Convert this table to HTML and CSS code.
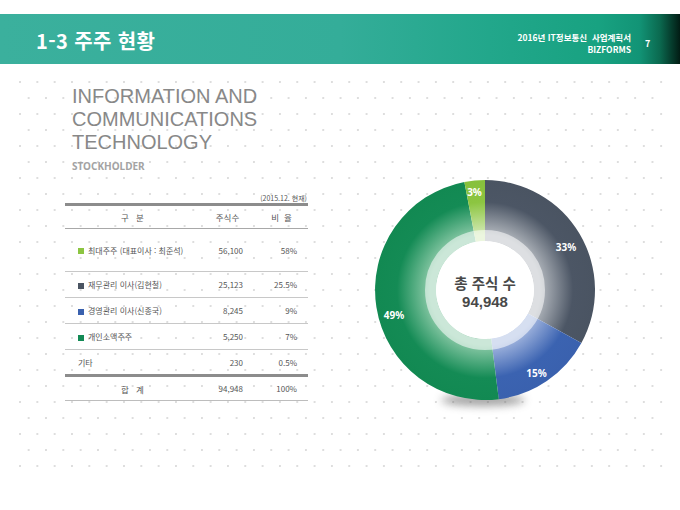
FILE: index.html
```html
<!DOCTYPE html>
<html lang="ko">
<head>
<meta charset="utf-8">
<link rel="stylesheet" href="styles.css">
</head>
<body>
<header class="topbar">
  <h1 class="page-title">1-3 주주 현황</h1>
  <div class="doc-info">
    <div>2016년 IT정보통신&nbsp; 사업계획서</div>
    <div>BIZFORMS</div>
  </div>
  <div class="page-num">7</div>
</header>
<main class="content">
  <section class="left">
    <h2 class="big-title">INFORMATION AND<br>COMMUNICATIONS<br>TECHNOLOGY</h2>
    <div class="subtitle">STOCKHOLDER</div>
    <div class="note">(2015.12. 현재)</div>
    <table class="stock">
      <thead>
        <tr class="head"><th class="c-name">구&nbsp;&nbsp;&nbsp;분</th><th class="c-num">주식수</th><th class="c-pct">비&nbsp;&nbsp;율</th></tr>
      </thead>
      <tbody>
        <tr class="r-first"><td class="c-name"><span class="sq sq-lg"></span>최대주주 (대표이사 : 최준석)</td><td class="c-num">56,100</td><td class="c-pct">58%</td></tr>
        <tr><td class="c-name"><span class="sq sq-dk"></span>재무관리 이사(김현철)</td><td class="c-num">25,123</td><td class="c-pct">25.5%</td></tr>
        <tr><td class="c-name"><span class="sq sq-bl"></span>경영관리 이사(신종국)</td><td class="c-num">8,245</td><td class="c-pct">9%</td></tr>
        <tr><td class="c-name"><span class="sq sq-gr"></span>개인소액주주</td><td class="c-num">5,250</td><td class="c-pct">7%</td></tr>
        <tr class="r-last"><td class="c-name">기타</td><td class="c-num">230</td><td class="c-pct">0.5%</td></tr>
        <tr class="r-total"><td class="c-name total-label">합&nbsp;&nbsp;&nbsp;계</td><td class="c-num">94,948</td><td class="c-pct">100%</td></tr>
      </tbody>
    </table>
  </section>
  <svg class="donut" width="242" height="250" viewBox="0 0 242 250" xmlns="http://www.w3.org/2000/svg">
    <defs>
      <radialGradient id="gDark" gradientUnits="userSpaceOnUse" cx="120" cy="120" r="110">
        <stop offset="0.5" stop-color="#b4b9bf"/>
        <stop offset="0.8" stop-color="#4c5665"/>
        <stop offset="1" stop-color="#4a5462"/>
      </radialGradient>
      <radialGradient id="gBlue" gradientUnits="userSpaceOnUse" cx="120" cy="120" r="110">
        <stop offset="0.5" stop-color="#a5b8e0"/>
        <stop offset="0.8" stop-color="#3b63b1"/>
        <stop offset="1" stop-color="#3a61ae"/>
      </radialGradient>
      <radialGradient id="gGreen" gradientUnits="userSpaceOnUse" cx="120" cy="120" r="110">
        <stop offset="0.5" stop-color="#8ccaa8"/>
        <stop offset="0.8" stop-color="#148b55"/>
        <stop offset="1" stop-color="#128952"/>
      </radialGradient>
      <radialGradient id="gLight" gradientUnits="userSpaceOnUse" cx="120" cy="120" r="110">
        <stop offset="0.5" stop-color="#d4eab8"/>
        <stop offset="0.8" stop-color="#8cc541"/>
        <stop offset="1" stop-color="#86c03c"/>
      </radialGradient>
      <filter id="blur" x="-50%" y="-200%" width="200%" height="500%">
        <feGaussianBlur stdDeviation="4"/>
      </filter>
    </defs>
    <ellipse cx="118" cy="230" rx="42" ry="6" fill="#555" opacity="0.55" filter="url(#blur)"/>
    <path d="M120 10 A110 110 0 0 1 216.39 173.0 L162.94 143.61 A49 49 0 0 0 120 71 Z" fill="url(#gDark)"/>
    <path d="M216.39 173.0 A110 110 0 0 1 133.79 229.13 L126.14 168.61 A49 49 0 0 0 162.94 143.61 Z" fill="url(#gBlue)"/>
    <path d="M133.79 229.13 A110 110 0 0 1 99.39 11.95 L110.82 71.87 A49 49 0 0 0 126.14 168.61 Z" fill="url(#gGreen)"/>
    <path d="M99.39 11.95 A110 110 0 0 1 120 10 L120 71 A49 49 0 0 0 110.82 71.87 Z" fill="url(#gLight)"/>
    <circle cx="120" cy="120" r="54.5" fill="none" stroke="#ffffff" stroke-opacity="0.55" stroke-width="11"/>
    <circle cx="120" cy="120" r="49" fill="#ffffff"/>
    <text class="seg-label" x="109.5" y="21.5">3%</text>
    <text class="seg-label" x="201" y="76.5">33%</text>
    <text class="seg-label" x="171.5" y="203">15%</text>
    <text class="seg-label" x="29" y="145">49%</text>
    <text class="center-label" x="120" y="112">총 주식 수</text>
    <text class="center-num" x="120" y="131">94,948</text>
  </svg>
</main>
</body>
</html>
```

FILE: styles.css
```css
html, body {
  margin: 0;
  padding: 0;
  background: #ffffff;
}
body {
  width: 680px;
  height: 510px;
  overflow: hidden;
  font-family: "Noto Sans CJK KR", "Noto Sans", sans-serif;
  color: #555;
}
.topbar {
  margin-top: 14px;
  height: 50px;
  display: flex;
  align-items: center;
  padding-left: 36px;
  padding-right: 29px;
  background: linear-gradient(90deg, #3bb09d 0%, #34ad99 50%, #22a78b 72%, #18a281 88%, #129476 94%, #0b6a50 97%, #021c14 100%);
  color: #ffffff;
}
.page-title {
  margin: 0;
  font-size: 20px;
  font-weight: 700;
  letter-spacing: 0.4px;
  line-height: 24px;
  padding-top: 3px;
}
.doc-info {
  margin-left: auto;
  text-align: right;
  font-size: 8.5px;
  font-weight: 700;
  line-height: 12px;
  padding-top: 8px;
}
.page-num {
  margin-left: 14px;
  font-size: 9px;
  font-weight: 700;
  width: 6px;
  padding-top: 8px;
}
.content {
  margin: 10px 12px 0 16px;
  height: 400px;
  display: flex;
  padding-left: 49px;
  background-image:
    radial-gradient(circle at center, #d9d9d9 0, #dedede 0.8px, rgba(255,255,255,0) 1.3px),
    radial-gradient(circle at center, #d9d9d9 0, #dedede 0.8px, rgba(255,255,255,0) 1.3px);
  background-size: 17.33px 32px, 17.33px 32px;
  background-position: -4.67px -8px, 4px 8px;
}
.left {
  width: 243px;
  padding-top: 11px;
}
.big-title {
  margin: 0;
  padding-left: 7px;
  font-family: "Liberation Sans", Arial, sans-serif;
  font-weight: 400;
  font-size: 20px;
  line-height: 23px;
  color: #888888;
}
.subtitle {
  margin-top: 6px;
  padding-left: 7px;
  font-family: "Noto Sans", sans-serif;
  font-size: 10px;
  font-weight: 700;
  line-height: 12px;
  color: #a3a3a3;
}
.note {
  margin-top: 21px;
  text-align: right;
  padding-right: 1px;
  font-size: 7px;
  line-height: 10px;
  color: #555;
}
.stock {
  width: 243px;
  border-collapse: collapse;
  border-top: 3px solid #8c8c8c;
  font-size: 8px;
  color: #555;
  table-layout: fixed;
}
.stock td, .stock th {
  padding: 0;
  font-weight: 400;
  white-space: nowrap;
}
.c-name { width: 135px; }
.c-num { width: 55px; }
.c-pct { width: 53px; }
.head { height: 24px; border-bottom: 1px solid #a8a8a8; }
.head th { text-align: center; font-size: 8.5px; }
.stock tbody tr { height: 26px; border-bottom: 1px solid #c8c8c8; }
.stock tbody tr.r-first { height: 43px; }
.stock tbody tr.r-last { border-bottom: 3px solid #8c8c8c; }
.stock tbody tr.r-total { height: 25px; border-bottom: 1px solid #bdbdbd; }
.stock tbody td.c-name { padding-left: 13px; }
.stock tbody td.c-num { text-align: right; padding-right: 12px; }
.stock tbody td.c-pct { text-align: right; padding-right: 11px; }
.stock tbody td.total-label { text-align: center; padding-left: 0; font-size: 8.5px; }
.sq {
  display: inline-block;
  width: 6px;
  height: 6px;
  margin-right: 4px;
  vertical-align: -0.5px;
}
.sq-lg { background: #8cc541; }
.sq-dk { background: #4a5462; }
.sq-bl { background: #3a61ae; }
.sq-gr { background: #138a55; }
.donut {
  margin-left: 57px;
  margin-top: 96px;
  flex: none;
}
.seg-label {
  font-family: "Noto Sans", sans-serif;
  font-size: 10px;
  font-weight: 700;
  fill: #ffffff;
  text-anchor: middle;
  dominant-baseline: central;
}
.center-label {
  font-family: "Noto Sans CJK KR", "Noto Sans", sans-serif;
  font-size: 14.5px;
  font-weight: 700;
  fill: #484848;
  text-anchor: middle;
  dominant-baseline: central;
}
.center-num {
  font-family: "Liberation Sans", Arial, sans-serif;
  font-size: 15px;
  font-weight: 700;
  fill: #484848;
  text-anchor: middle;
  dominant-baseline: central;
}
```
